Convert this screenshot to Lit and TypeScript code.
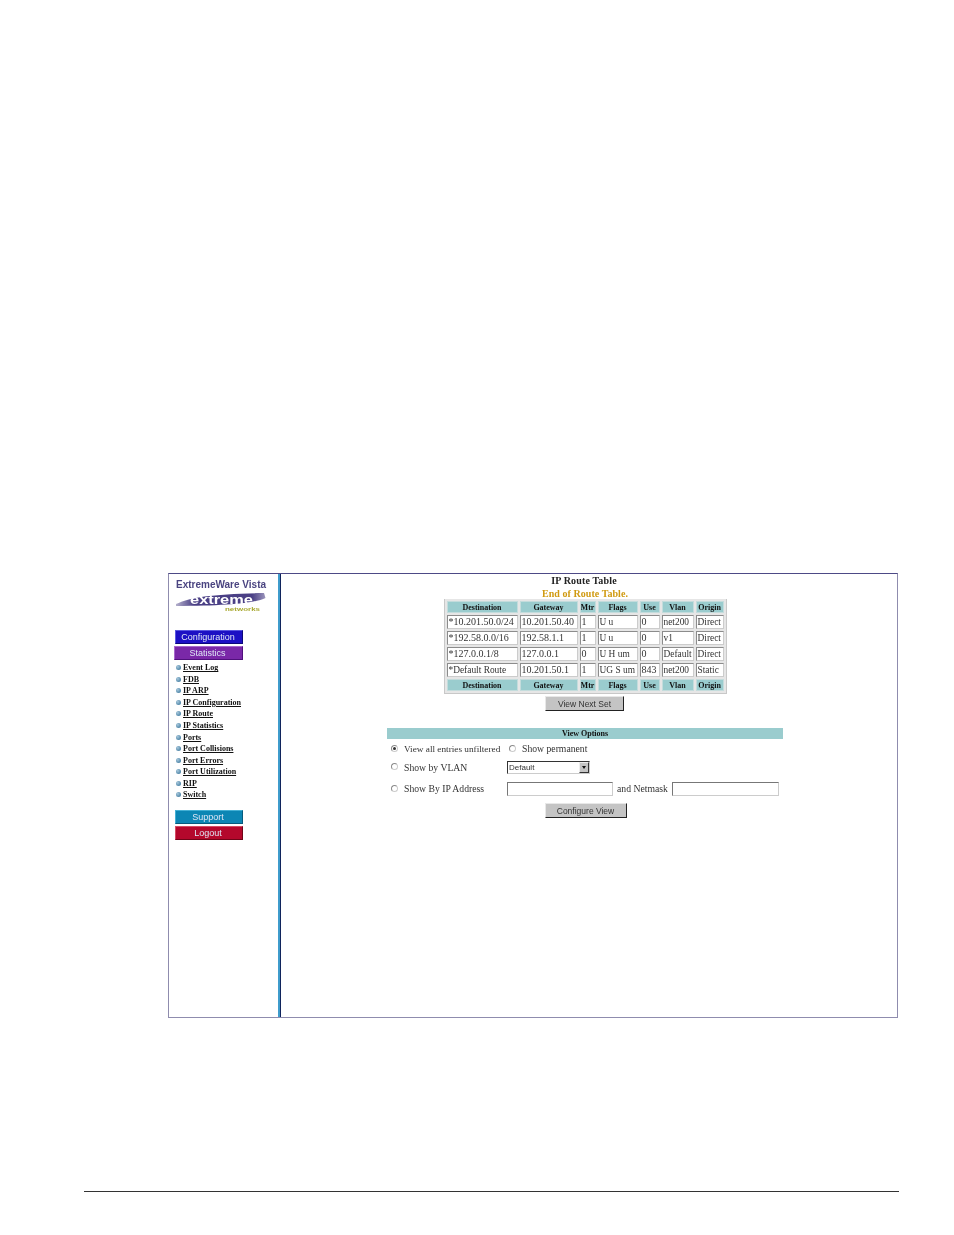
import { LitElement, html, css } from "lit";
import { customElement } from "lit/decorators.js";

const links = ["Event Log","FDB","IP ARP","IP Configuration","IP Route","IP Statistics","Ports","Port Collisions","Port Errors","Port Utilization","RIP","Switch"];
const head = ["Destination","Gateway","Mtr","Flags","Use","Vlan","Origin"];
const rows = [
  ["*10.201.50.0/24","10.201.50.40","1","U u","0","net200","Direct"],
  ["*192.58.0.0/16","192.58.1.1","1","U u","0","v1","Direct"],
  ["*127.0.0.1/8","127.0.0.1","0","U H um","0","Default","Direct"],
  ["*Default Route","10.201.50.1","1","UG S um","843","net200","Static"],
];
const widths = [71,58,16,40,20,32,28];

@customElement("app-root")
export class AppRoot extends LitElement {
  static styles = css`
    :host { display: block; width: 954px; height: 1235px; background: #fff; overflow: hidden; font-family: "Liberation Serif", serif; color: #222; }
    .page { display: flex; flex-direction: column; padding: 573px 55px 0 84px; box-sizing: border-box; height: 1235px; }
    .frame { margin-left: 84px; width: 730px; height: 445px; box-sizing: border-box; border: 1px solid #8f8cae; border-top-color: #4d4a86; display: flex; }
    .side { width: 109px; flex: none; display: flex; flex-direction: column; padding: 5px 0 0 6px; box-sizing: border-box; filter: blur(0.3px); }
    .brand { font: bold 10px "Liberation Sans", sans-serif; color: #4a4480; line-height: 12px; margin-left: 1px; white-space: nowrap; }
    .logo { display: block; margin: 1px 0 0 1px; }
    .btn { display: flex; align-items: center; justify-content: center; width: 68px; height: 14px; box-sizing: border-box; padding-right: 2px; font: 9px "Liberation Sans", sans-serif; color: #dfe6f5; }
    .cfg { margin-top: 18px; background: #1c10c4; border: 1px solid; border-color: #5a58e0 #0c0878 #0c0878 #5a58e0; }
    .stat { margin-top: 2px; background: #7a28a8; border: 1px solid; border-color: #a868cc #50107c #50107c #a868cc; width: 69px; margin-left: -1px; }
    .sup { margin-top: 10px; background: #0c86b4; border: 1px solid; border-color: #44b0d4 #065a7c #065a7c #44b0d4; }
    .log { margin-top: 2px; background: #b4082c; border: 1px solid; border-color: #d44c64 #700418 #700418 #d44c64; }
    .links { list-style: none; margin: 2px 0 0 1px; padding: 0; display: flex; flex-direction: column; height: 138px; }
    .links li { height: 11.55px; flex: none; display: flex; align-items: center; gap: 2px; font: bold 8px/11px "Liberation Serif", serif; white-space: nowrap; }
    .links a { color: #111; text-decoration: underline; }
    .dot { width: 5px; height: 5px; border-radius: 50%; background: radial-gradient(circle at 35% 35%, #a8c8dc, #2c6c94); flex: none; }
    .bar { width: 3px; flex: none; background: #3f9ccc; border-right: 1px solid #10245c; box-sizing: border-box; }
    .main { flex: 1; display: flex; flex-direction: column; align-items: center; min-width: 0; filter: blur(0.3px); }
    .content { width: 396px; margin-left: -8px; display: flex; flex-direction: column; align-items: center; }
    .title { font: bold 10px/13px "Liberation Serif", serif; color: #222; margin-left: -2px; letter-spacing: 0.15px; }
    .sub { font: bold 10px/13px "Liberation Serif", serif; color: #d09a10; letter-spacing: 0.05px; }
    table.rt { border-collapse: separate; border-spacing: 2px; background: #e6e6e6; border: 1px solid #c8c8c8; border-top: 0; margin-top: -1px; table-layout: fixed; width: 283px; box-sizing: border-box; }
    .rt th { background: #9accce; height: 12px; padding: 1px 0 0; font: bold 8px/9px "Liberation Serif", serif; color: #111; box-sizing: border-box; border: 1px solid #c4dcdc; white-space: nowrap; overflow: hidden; }
    .rt td { background: #fff; height: 14px; padding: 0 0 0 1px; font: 10px/12px "Liberation Serif", serif; box-sizing: border-box; border: 1px solid #8c8c8c; border-right-color: #ccc; border-bottom-color: #ccc; white-space: nowrap; overflow: hidden; color: #333; }
    .rt td.word { font-size: 9.4px; }
    .gbtn { display: flex; align-items: center; justify-content: center; box-sizing: border-box; height: 15px; background: #c4c4c4; border: 1px solid; border-color: #e8e8e8 #222 #222 #e8e8e8; font: 8.5px "Liberation Sans", sans-serif; color: #333; }
    .next { width: 79px; margin: 2px 0 0 -1px; }
    .optbar { width: 396px; height: 11px; background: #9accce; margin-top: 17px; display: flex; justify-content: center; font: bold 8px/12px "Liberation Serif", serif; color: #111; }
    .line { display: flex; align-items: center; width: 396px; box-sizing: border-box; padding-left: 4px; font: 9.7px/12px "Liberation Serif", serif; color: #333; white-space: nowrap; }
    .l1 { height: 18px; margin-top: 1px; }
    .l2 { height: 18px; padding-top: 1px; }
    .l3 { height: 22px; margin-top: 2px; }
    .radio { width: 7px; height: 7px; border-radius: 50%; border: 1px solid #8a8a8a; border-right-color: #ccc; border-bottom-color: #ccc; box-sizing: border-box; flex: none; margin-right: 6px; position: relative; margin-top: -2px; }
    .radio.on::after { content: ""; position: absolute; inset: 1px; border-radius: 50%; background: #333; }
    .lbl1 { width: 105px; font-size: 9.25px; } .lbl2 { width: 103px; }
    .sel { width: 83px; height: 13px; box-sizing: border-box; border: 1px solid; border-color: #333 #ccc #ccc #333; font: 8px/11px "Liberation Sans", sans-serif; padding-left: 1px; display: flex; justify-content: space-between; align-items: center; color: #333; }
    .arrow { width: 10px; height: 11px; background: #c4c4c4; border: 1px solid; border-color: #eee #333 #333 #eee; box-sizing: border-box; display: flex; align-items: center; justify-content: center; }
    .arrow::before { content: ""; border: 2px solid transparent; border-top: 3px solid #111; border-bottom: 0; }
    .inp { height: 14px; box-sizing: border-box; border: 1px solid; border-color: #777 #ccc #ccc #777; background: #fff; flex: none; }
    .cv { width: 82px; height: 15px; margin-top: 3px; margin-left: 1px; }
    .w106 { width: 106px; } .w107 { width: 107px; }
    .andn { margin: 0 3px 0 4px; width: 52px; }
    .rule { margin-top: 173px; height: 1px; background: #333; width: 815px; }
  `;

  render() {
    return html`<div class="page">
      <div class="frame">
        <nav class="side">
          <div class="brand">ExtremeWare Vista</div>
          <svg class="logo" width="92" height="20" viewBox="0 0 92 20">
            <defs>
              <linearGradient id="sw" x1="0" x2="1" y1="0" y2="0">
                <stop offset="0" stop-color="#b4b0cc"/>
                <stop offset="0.2" stop-color="#4a3f85"/>
                <stop offset="0.85" stop-color="#4a3f85"/>
                <stop offset="1" stop-color="#9c96bc"/>
              </linearGradient>
            </defs>
            <path d="M0 12 C14 5 38 2 88 1 L89.5 6 C80 11 50 14 0 14 Z" fill="url(#sw)"/>
            <text x="14" y="11.5" font-family="Liberation Sans" font-weight="bold" font-size="13" fill="#fff" textLength="63" lengthAdjust="spacingAndGlyphs">extreme</text>
            <text x="49" y="18.5" font-family="Liberation Sans" font-size="6" font-weight="bold" fill="#a8a830" textLength="35" lengthAdjust="spacingAndGlyphs">networks</text>
          </svg>
          <div class="btn cfg">Configuration</div>
          <div class="btn stat">Statistics</div>
          <ul class="links">
            ${links.map((l) => html`<li><span class="dot"></span><a>${l}</a></li>`)}
          </ul>
          <div class="btn sup">Support</div>
          <div class="btn log">Logout</div>
        </nav>
        <div class="bar"></div>
        <main class="main">
          <div class="content">
            <div class="title">IP Route Table</div>
            <div class="sub">End of Route Table.</div>
            <table class="rt">
              <colgroup>${widths.map((w) => html`<col style="width:${w}px" />`)}</colgroup>
              <tr>${head.map((h) => html`<th>${h}</th>`)}</tr>
              ${rows.map((r) => html`<tr>${r.map((c) => html`<td class=${/[a-zA-Z]/.test(c) ? "word" : ""}>${c}</td>`)}</tr>`)}
              <tr>${head.map((h) => html`<th>${h}</th>`)}</tr>
            </table>
            <div class="gbtn next">View Next Set</div>
            <div class="optbar"><span>View Options</span></div>
            <div class="line l1"><span class="radio on"></span><span class="lbl1">View all entries unfiltered</span><span class="radio"></span><span>Show permanent</span></div>
            <div class="line l2"><span class="radio"></span><span class="lbl2">Show by VLAN</span><div class="sel">Default<span class="arrow"></span></div></div>
            <div class="line l3"><span class="radio"></span><span class="lbl2">Show By IP Address</span><span class="inp w106"></span><span class="andn">and Netmask</span><span class="inp w107"></span></div>
            <div class="gbtn cv">Configure View</div>
          </div>
        </main>
      </div>
      <div class="rule"></div>
    </div>`;
  }
}
